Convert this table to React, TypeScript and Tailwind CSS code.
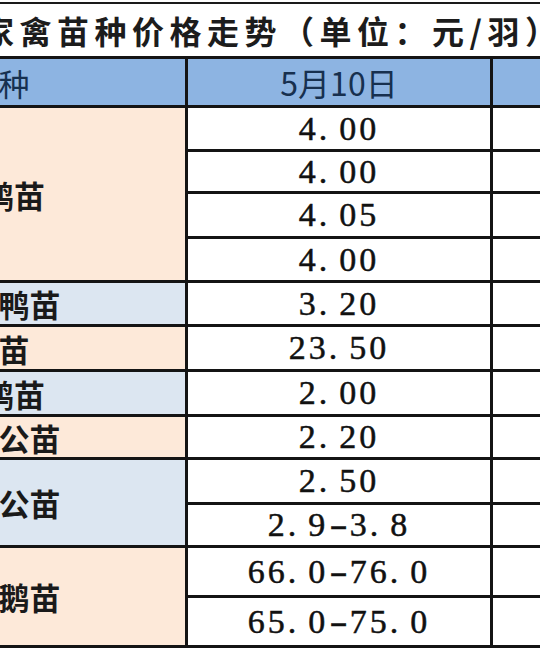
import React from 'react';

type Row = {
  value: string;
  label?: string;
  span?: number;
  tone?: 'peach' | 'blue';
  h: number;
};

// 行高按参考图中的线位置量出
const rows: Row[] = [
  { value: '4.00', label: '肉鸭苗', span: 4, tone: 'peach', h: 44 },
  { value: '4.00', h: 42 },
  { value: '4.05', h: 45 },
  { value: '4.00', h: 44 },
  { value: '3.20', label: '半番鸭苗', span: 1, tone: 'blue', h: 44 },
  { value: '23.50', label: '鸽苗', span: 1, tone: 'peach', h: 45 },
  { value: '2.00', label: '番鸭苗', span: 1, tone: 'blue', h: 45 },
  { value: '2.20', label: '蛋鸡公苗', span: 1, tone: 'peach', h: 43 },
  { value: '2.50', label: '肉杂公苗', span: 2, tone: 'blue', h: 45 },
  { value: '2.9-3.8', h: 43 },
  { value: '66.0-76.0', label: '白鹅鹅苗', span: 2, tone: 'peach', h: 50 },
  { value: '65.0-75.0', h: 50 },
];

/**
 * 数值按宋体半角的样子排：小数点后留空，连字符拉长
 */
const renderValue = (v: string) =>
  v.split('').map((ch, i) => {
    if (ch === '.') return <span key={i} className="mr-[9px]">.</span>;
    if (ch === '-')
      return (
        <span key={i} className="inline-block scale-x-[1.6] mx-[5px] tracking-normal">
          -
        </span>
      );
    return ch;
  });

const cell = 'p-0 border-[3px] border-[#141414] leading-none';

export default function App() {
  return (
    <div className="w-[540px] h-[650px] overflow-hidden bg-white">
      <div className="-ml-[191px] w-[986px] pt-[2px]">
        {/* 标题 */}
        <div
          className="h-[54px] border-t-2 border-[#1a1a1a] flex items-center pl-[173px] leading-none
                     text-[32px] tracking-[5.5px] font-semibold text-[#1c1c1c] whitespace-nowrap
                     font-['Noto_Sans_CJK_SC',sans-serif]"
        >
          家禽苗种价格走势（单位：元/羽）
        </div>

        <table className="table-fixed border-collapse w-[986px]">
          <colgroup>
            <col className="w-[376px]" />
            <col className="w-[305px]" />
            <col className="w-[305px]" />
          </colgroup>
          <tbody>
            {/* 表头 */}
            <tr>
              <td
                className={`${cell} h-[49px] bg-[#8db4e2] text-center text-[31px] text-[#17304f]
                            font-['Noto_Sans_CJK_SC',sans-serif]`}
              >
                品种
              </td>
              <td
                className={`${cell} h-[49px] bg-[#8db4e2] text-center text-[32px] text-[#17304f]
                            font-['Noto_Sans_CJK_SC',sans-serif]`}
              >
                5月10日
              </td>
              <td className={`${cell} h-[49px] bg-[#8db4e2]`} />
            </tr>

            {rows.map((r, i) => (
              <tr key={i}>
                {r.label && (
                  <td
                    rowSpan={r.span}
                    className={`${cell} text-center align-middle text-[31px] font-semibold text-[#1a1a1a]
                                font-['Noto_Sans_CJK_SC',sans-serif]
                                ${r.tone === 'peach' ? 'bg-[#fde9d9]' : 'bg-[#dce6f1]'}`}
                  >
                    {r.label}
                  </td>
                )}
                <td
                  className={`${cell} bg-white text-center align-middle text-[34px] tracking-[3px]
                              text-[#111] whitespace-nowrap font-['Liberation_Serif',serif]
                              [-webkit-text-stroke:0.5px_#111]`}
                  style={{ height: r.h }}
                >
                  {renderValue(r.value)}
                </td>
                <td className={`${cell} bg-white`} style={{ height: r.h }} />
              </tr>
            ))}
          </tbody>
        </table>
      </div>
    </div>
  );
}
